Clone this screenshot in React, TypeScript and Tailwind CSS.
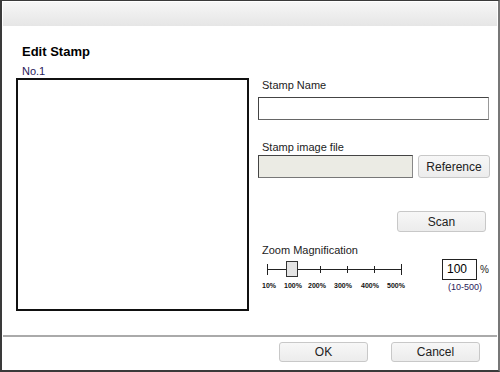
import React from 'react';

const ticks = ['10%', '100%', '200%', '300%', '400%', '500%'];
const tickX = [7, 32, 60, 87, 114, 141];
const labelW = ['w-[22px]', 'w-[24px]', 'w-[26px]', 'w-[27px]', 'w-[26px]', 'w-[20px]'];

const Btn = ({ label, className }: { label: string; className: string }) => (
  <button className={`rounded-[3px] border border-[#c8c8c8] bg-gradient-to-b from-[#f7f7f7] to-[#ececec] text-[12px] text-[#222] ${className}`}>
    {label}
  </button>
);

const App = () => {
  return (
    <div className="w-[500px] h-[372px] bg-white border-l-2 border-t border-r-2 border-b-2 border-l-[#3a3a3a] border-t-[#3a3a3a] border-r-[#777] border-b-[#3a3a3a] flex flex-col font-['Liberation_Sans',Arial,sans-serif] text-[#222]">
      <div className="mx-[1px] mt-[1px] h-[24px] bg-gradient-to-b from-[#f6f6f6] to-[#e6e6e6]" />

      <div className="flex-1 flex">
        <div className="pl-[14px] pt-[18px] flex flex-col">
          <div className="pl-[6px] text-[13px] font-bold leading-[16px] text-black">Edit Stamp</div>
          <div className="pl-[6px] mt-[5px] text-[11px] leading-[12px] text-[#2a1a5a]">No.1</div>
          <div className="w-[233px] h-[233px] border-2 border-[#111] mt-[1px]" />
        </div>

        <div className="flex-1 pl-[9px] pt-[53px] pr-[9px] flex flex-col">
          <div className="pl-[4px] text-[11px] leading-[13px]">Stamp Name</div>
          <div className="mt-[5px] h-[23px] w-[231px] border border-[#444] border-r-[#999] border-b-[#666]" />

          <div className="pl-[4px] mt-[21px] text-[11px] leading-[13px]">Stamp image file</div>
          <div className="mt-[1px] flex items-center gap-[5px]">
            <div className="h-[23px] w-[155px] bg-[#ebebe4] border border-[#444] border-r-[#888] border-b-[#777]" />
            <Btn label="Reference" className="h-[23px] w-[72px]" />
          </div>

          <div className="mt-[33px] flex justify-end pr-[4px]">
            <Btn label="Scan" className="h-[21px] w-[89px]" />
          </div>

          <div className="pl-[4px] mt-[12px] text-[11px] leading-[13px]">Zoom Magnification</div>

          <div className="flex mt-[2px]">
            <div className="w-[160px] pl-[2px]">
              <div className="relative h-[20px] w-[143px]">
                <div className="absolute left-[7px] right-[2px] top-[10px] h-[1px] bg-[#222]" />
                {tickX.map((x, i) => (
                  <div
                    key={i}
                    className={`absolute w-[1px] bg-[#222] ${i === 0 || i === 5 ? 'top-[5px] h-[11px]' : 'top-[7px] h-[7px]'}`}
                    style={{ left: x }}
                  />
                ))}
                <div className="absolute left-[26px] top-[2px] w-[12px] h-[16px] bg-[#e4e4e4] border border-[#333]" />
              </div>
              <div className="mt-[2px] pl-[2px] flex text-[7px] font-bold leading-[10px] text-[#111]">
                {ticks.map((t, i) => (
                  <span key={t} className={labelW[i]}>{t}</span>
                ))}
              </div>
            </div>
            <div className="ml-[24px] flex flex-col items-start">
              <div className="flex items-center">
                <div className="h-[21px] w-[35px] border border-[#222] pl-[4px] text-[12px] leading-[19px] text-black">100</div>
                <span className="ml-[3px] text-[10px]">%</span>
              </div>
              <div className="mt-[2px] pl-[6px] text-[9px] leading-[11px] text-[#2a1a5a]">(10-500)</div>
            </div>
          </div>
        </div>
      </div>

      <div className="h-[2px] mx-[1px] bg-[#aaa]" />
      <div className="h-[33px] flex items-start pt-[5px] justify-end pr-[18px] gap-[23px]">
        <Btn label="OK" className="h-[20px] w-[89px]" />
        <Btn label="Cancel" className="h-[20px] w-[89px]" />
      </div>
    </div>
  );
};

export default App;
